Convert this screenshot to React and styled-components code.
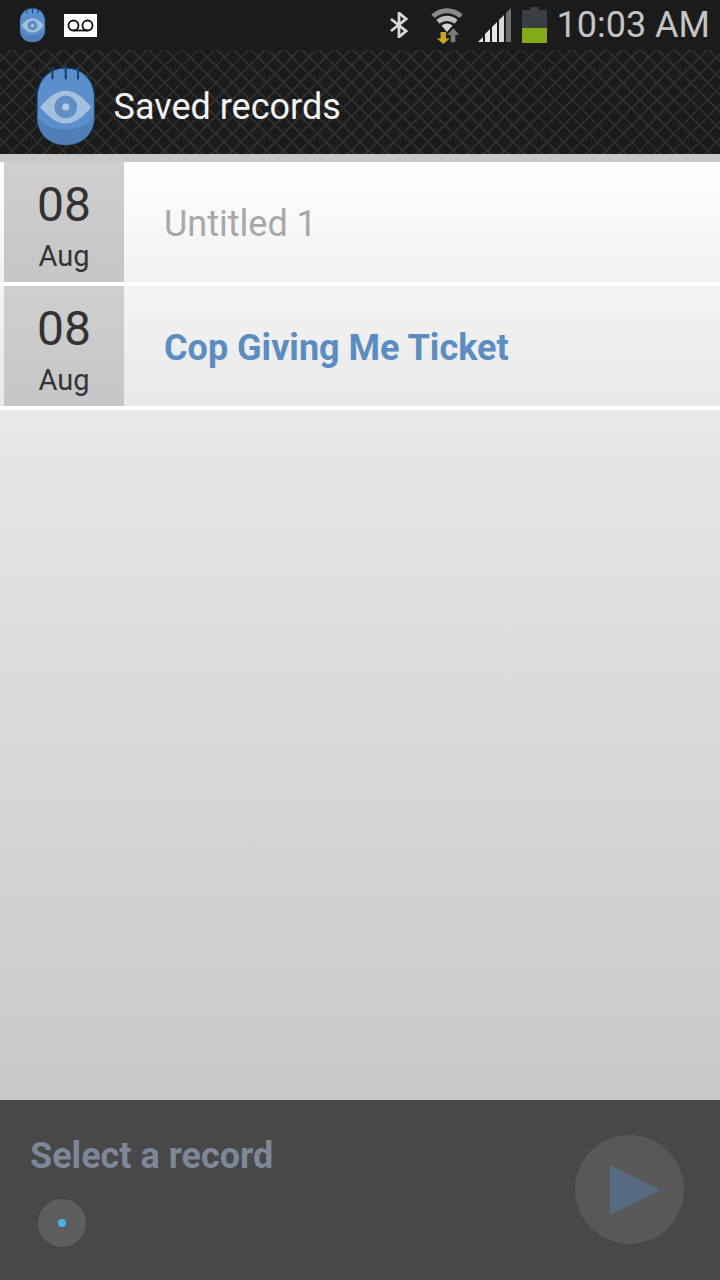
import React from 'react'
import styled, { createGlobalStyle } from 'styled-components'

const Global = createGlobalStyle`
html,body{margin:0;padding:0;background:#c8c8c8;}
body{font-family:Roboto,"Liberation Sans",sans-serif;}
`
const Screen = styled.div`
width:720px;
height:1280px;
display:flex;
flex-direction:column;
overflow:hidden;
`
const StatusBar = styled.div`
height:50px;
flex:none;
background:#1b1b1b;
display:flex;
align-items:center;
padding:0 10px 0 19px;
`
const StatusLeft = styled.div`
display:flex;
align-items:center;
gap:18px;
flex:1;
`
const StatusRight = styled.div`
display:flex;
align-items:center;
`
const StatusIcon = styled.div`
display:flex;
margin-left:${p => p.$gap}px;
`
const Clock = styled.span`
font-size:36px;
color:#c4c4c4;
margin-left:10px;
line-height:50px;
`
const Voicemail = styled.div`
width:33px;
height:23px;
background:#fff;
display:flex;
align-items:center;
justify-content:center;
`
const ActionBar = styled.div`
height:104px;
flex:none;
box-sizing:border-box;
display:flex;
align-items:center;
gap:17px;
padding:8px 0 0 35px;
background-color:#1b1b1b;
background-image:
  repeating-linear-gradient(45deg,transparent 0 10px,#2d2d2d 10px 12px),
  repeating-linear-gradient(-45deg,transparent 0 10px,#2d2d2d 10px 12px);
`
const BarTitle = styled.h1`
margin:2px 0 0;
font-size:36px;
font-weight:400;
color:#f4f4f4;
`
const Strip = styled.div`
height:8px;
flex:none;
background:#c9c9c9;
`
const List = styled.div`
flex:none;
display:flex;
flex-direction:column;
background:#fff;
`
const Row = styled.div`
height:120px;
display:flex;
padding-left:4px;
margin-bottom:4px;
background:linear-gradient(${p => p.$from},${p => p.$to});
`
const DateBox = styled.div`
width:120px;
flex:none;
display:flex;
flex-direction:column;
align-items:center;
background:linear-gradient(#cfcfcf,#c6c6c6);
color:#333;
`
const Day = styled.div`
font-size:48px;
line-height:48px;
margin-top:19px;
`
const Month = styled.div`
font-size:29px;
line-height:32px;
margin-top:11px;
`
const RowTitle = styled.div`
margin:4px 0 0 40px;
align-self:center;
font-size:36px;
font-weight:${p => (p.$active ? 700 : 400)};
color:${p => (p.$active ? '#5b8cc2' : '#a8a8a8')};
`
const Filler = styled.div`
flex:1;
background:linear-gradient(#e8e8e8,#c8c8c8);
`
const Player = styled.div`
height:180px;
flex:none;
background:#484848;
display:flex;
justify-content:space-between;
padding:35px 36px 0 30px;
box-sizing:border-box;
`
const PlayerLeft = styled.div`
display:flex;
flex-direction:column;
align-items:flex-start;
`
const PlayerTitle = styled.div`
font-size:36px;
line-height:42px;
font-weight:700;
color:#7c8798;
`
const Knob = styled.div`
width:48px;
height:48px;
border-radius:50%;
background:#5e5e5e;
margin:22px 0 0 8px;
display:flex;
align-items:center;
justify-content:center;
&::after{
  content:'';
  width:8px;
  height:8px;
  border-radius:50%;
  background:#45b4df;
}
`
const PlayButton = styled.div`
width:109px;
height:109px;
border-radius:50%;
background:#585858;
display:flex;
align-items:center;
justify-content:center;
padding-left:10px;
box-sizing:border-box;
`

const EyeLogo = ({ size }) => (
  <svg width={size * 60 / 80} height={size} viewBox="0 0 60 80">
    <path d="M30 3C12 3 2 16 2 32v18c0 17 12 28 28 28s28-11 28-28V32C58 16 48 3 30 3z" fill="#5a8fcb" stroke="#123c66" strokeWidth="1" />
    <path d="M2 50c0 17 12 28 28 28s28-11 28-28c-6 9-16 13-28 13S8 59 2 50z" fill="#4f7fb6" />
    <path d="M17 2v12M30 0v14M42 2v12" stroke="#16406c" strokeWidth="2" />
    <path d="M5 41C14 30 22 25 30 25s16 5 25 16c-9 11-17 16-25 16S14 52 5 41z" fill="#a4c0df" />
    <circle cx="30" cy="41" r="11" fill="#5f8fc4" />
    <circle cx="30" cy="41" r="3.500" fill="#b4cde6" />
  </svg>
)

const Bluetooth = () => (
  <svg width="18" height="26" viewBox="0 0 18 26" fill="none" stroke="#d8d8d8" strokeWidth="2.800">
    <path d="M1 7l15 12-7 6V1l7 6L1 19" />
  </svg>
)

const Wifi = () => (
  <svg width="34" height="37" viewBox="0 0 36 40">
    <path d="M1 8C11-1 25-1 35 8l-3.500 4C23 5 13 5 4.500 12z" fill="#8a8a8a" />
    <path d="M6.500 14c7-6 16-6 23 0l-3.500 4c-5-4-11-4-16 0z" fill="#bdbdbd" />
    <path d="M12 20c4-3 8-3 12 0l-6 7z" fill="#d6d6d6" />
    <path d="M11 27h6v7h4l-7 6-7-6h4z" fill="#c9a52a" />
    <path d="M25 23l6 7h-4v8h-5v-8h-4z" fill="#7d7d7d" />
  </svg>
)

const Signal = () => (
  <svg width="34" height="34" viewBox="0 0 34 34">
    <path d="M0 34l5-5v5z" fill="#e6e6e6" />
    <path d="M7 34v-8l5-5v13z" fill="#e6e6e6" />
    <path d="M14 34V19l5-5v20z" fill="#e6e6e6" />
    <path d="M21 34V12l5-5v27z" fill="#d8d8d8" />
    <path d="M28 34V5l5-5v34z" fill="#6e6e6e" />
  </svg>
)

const Battery = () => (
  <svg width="25" height="36" viewBox="0 0 25 36">
    <path d="M8 0h9v3h8v33H0V3h8z" fill="#3a3d42" />
    <rect y="21" width="25" height="15" fill="#82ab1c" />
  </svg>
)

const Voicetape = () => (
  <svg width="27" height="13" viewBox="0 0 27 13" fill="none" stroke="#111" strokeWidth="1.800">
    <circle cx="6.500" cy="6.500" r="5" />
    <circle cx="20.500" cy="6.500" r="5" />
    <path d="M6.500 11.500h14" />
  </svg>
)

const records = [
  { day: '08', month: 'Aug', title: 'Untitled 1', from: '#ffffff', to: '#f1f1f1' },
  { day: '08', month: 'Aug', title: 'Cop Giving Me Ticket', active: true, from: '#f3f3f3', to: '#e9e9e9' },
]

const App = () => (
  <Screen>
    <Global />
    <StatusBar>
      <StatusLeft>
        <EyeLogo size={36} />
        <Voicemail><Voicetape /></Voicemail>
      </StatusLeft>
      <StatusRight>
        <StatusIcon $gap={0}><Bluetooth /></StatusIcon>
        <StatusIcon $gap={22}><Wifi /></StatusIcon>
        <StatusIcon $gap={14}><Signal /></StatusIcon>
        <StatusIcon $gap={10}><Battery /></StatusIcon>
        <Clock>10:03 AM</Clock>
      </StatusRight>
    </StatusBar>
    <ActionBar>
      <EyeLogo size={82} />
      <BarTitle>Saved records</BarTitle>
    </ActionBar>
    <Strip />
    <List>
      {records.map((r, i) => (
        <Row key={i} $from={r.from} $to={r.to}>
          <DateBox>
            <Day>{r.day}</Day>
            <Month>{r.month}</Month>
          </DateBox>
          <RowTitle $active={r.active}>{r.title}</RowTitle>
        </Row>
      ))}
    </List>
    <Filler />
    <Player>
      <PlayerLeft>
        <PlayerTitle>Select a record</PlayerTitle>
        <Knob />
      </PlayerLeft>
      <PlayButton>
        <svg width="52" height="52" viewBox="0 0 54 52">
          <path d="M1 0l52 26L1 52z" fill="#566c82" />
        </svg>
      </PlayButton>
    </Player>
  </Screen>
)

export default App
